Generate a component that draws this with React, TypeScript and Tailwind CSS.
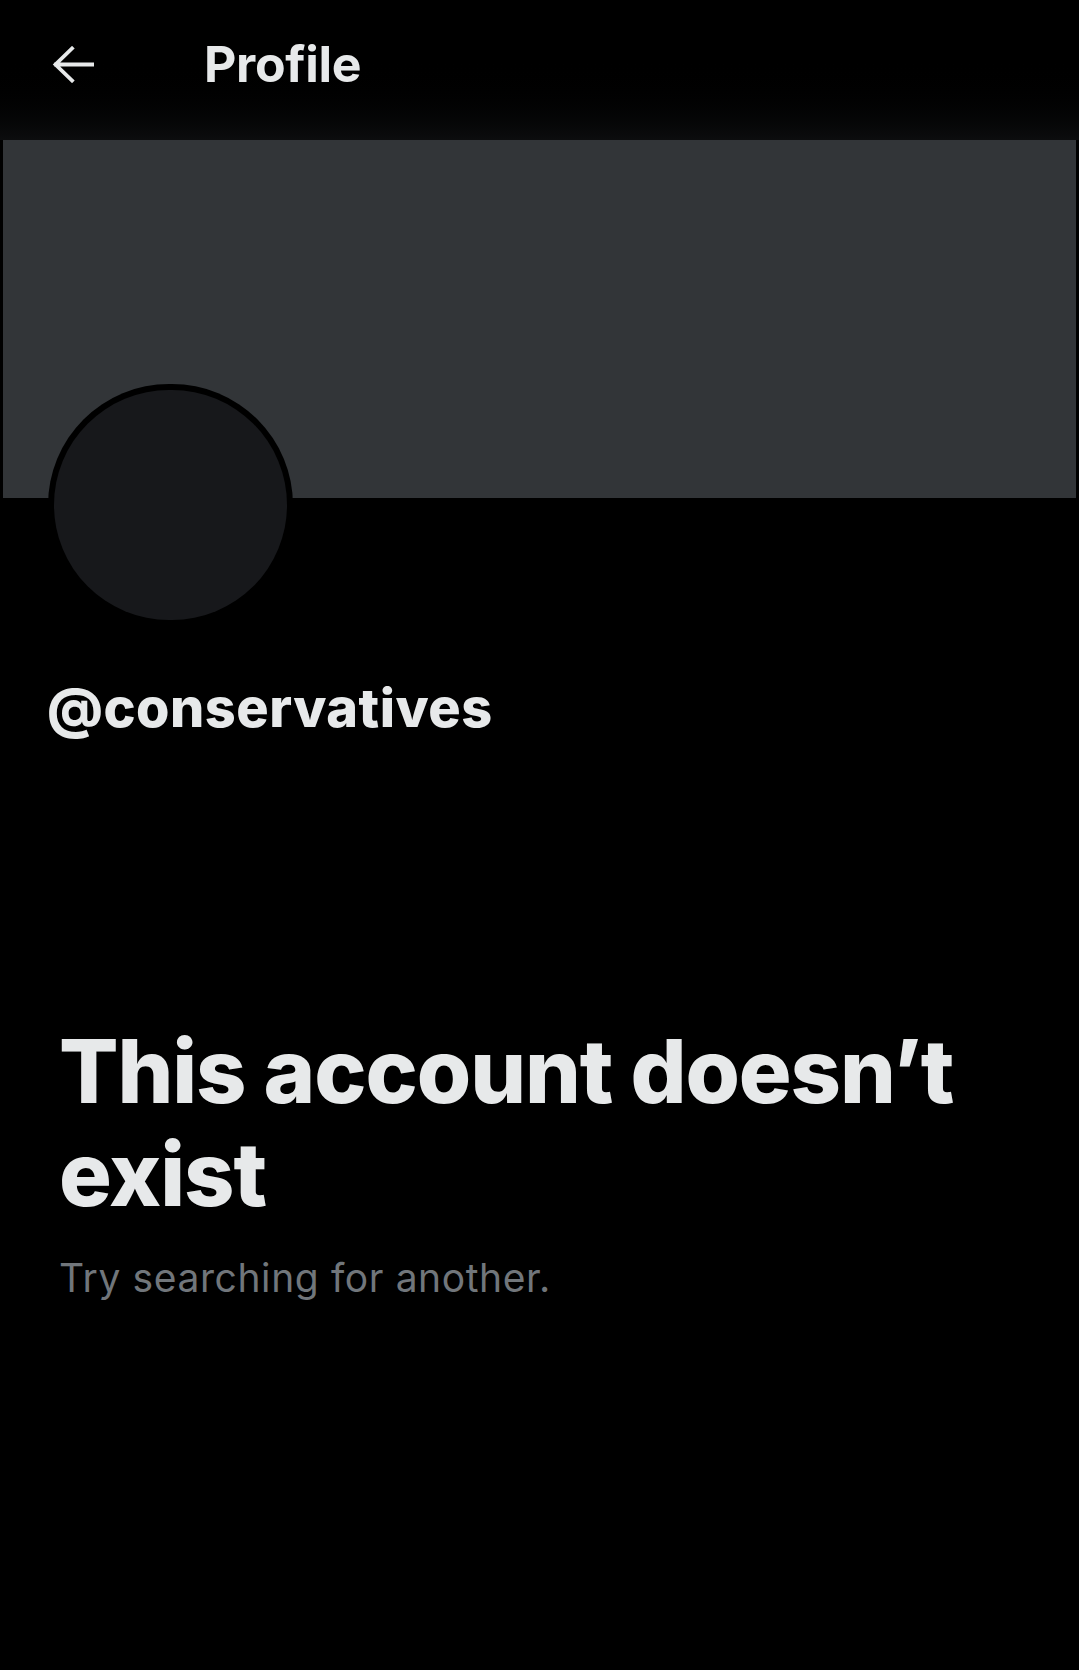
const BackArrow = () => (
  <svg width="42" height="37" viewBox="0 0 42 37" fill="none">
    <path
      d="M41 18.5H4M20 2.5L3.5 18.5L20 34.5"
      stroke="#e7e9ea"
      strokeWidth="3.8"
      strokeLinecap="square"
    />
  </svg>
);

export default function App() {
  return (
    <div className="min-h-[1670px] w-full bg-black text-[#e7e9ea] font-['Inter',_sans-serif]">
      <header className="flex h-[140px] items-center bg-gradient-to-b from-black from-40% to-[#0c0d0e] pb-[12px]">
        <div className="ml-[52px] flex w-[152px] items-center">
          <BackArrow />
        </div>
        <h1 className="text-[50px] font-bold leading-none tracking-[-0.3px]">Profile</h1>
      </header>

      <div className="mx-[3px] h-[358px] bg-[#323538]" />

      <div className="ml-[48px] -mt-[114px] h-[242px] w-[245px] rounded-full bg-black p-[6px]">
        <div className="h-full w-full rounded-full bg-[#17181b]" />
      </div>

      <p className="ml-[47px] mt-[55px] text-[54px] font-extrabold leading-none tracking-[0.5px]">
        @conservatives
      </p>

      <section className="ml-[59px] mt-[285px]">
        <h2 className="text-[88px] font-extrabold leading-[103px] tracking-[-1.1px]">
          This account doesn’t
          <br />
          exist
        </h2>
        <p className="mt-[32px] text-[39px] leading-none tracking-[0.6px] text-[#71767b]">
          Try searching for another.
        </p>
      </section>
    </div>
  );
}
